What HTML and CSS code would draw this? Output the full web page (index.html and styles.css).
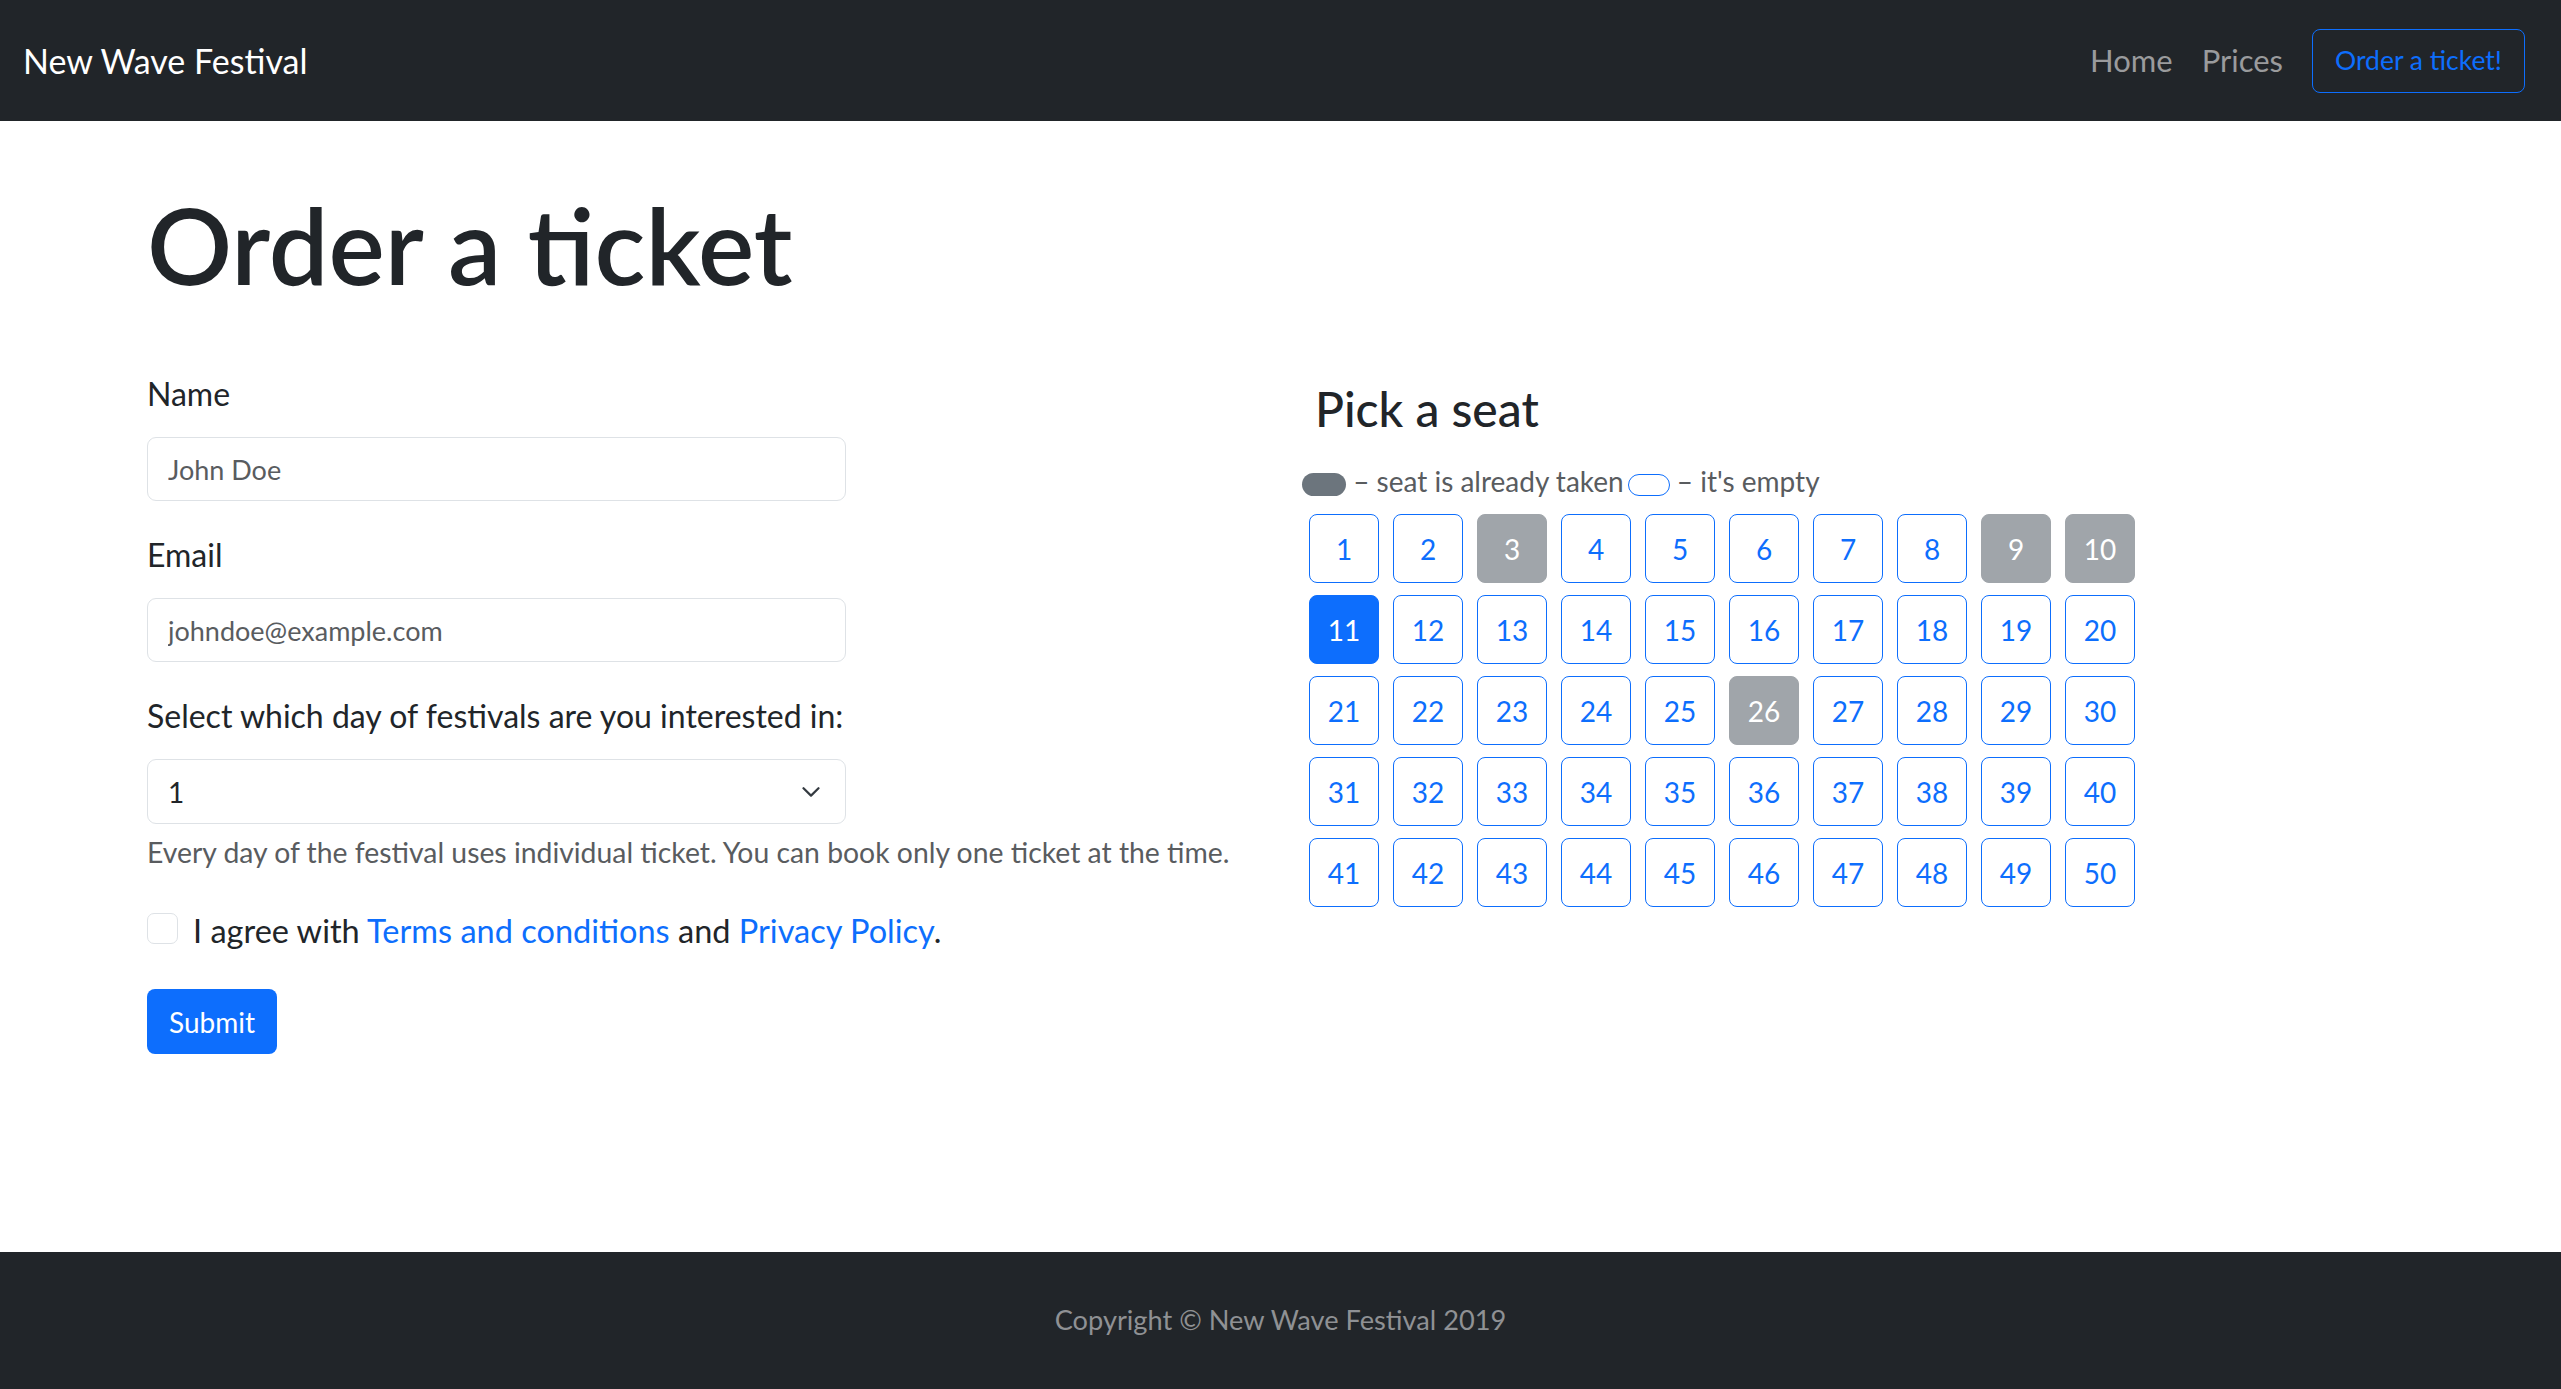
FILE: index.html
```html
<!DOCTYPE html>
<html lang="en">
<head>
<meta charset="utf-8">
<title>Order a ticket - New Wave Festival</title>
<link rel="stylesheet" href="styles.css">
</head>
<body>
<nav class="navbar">
  <a class="brand" href="#">New Wave Festival</a>
  <div class="nav-right">
    <a class="nav-link" href="#">Home</a>
    <a class="nav-link" href="#">Prices</a>
    <a class="btn-outline" href="#">Order a ticket!</a>
  </div>
</nav>
<main class="main">
  <h1 class="title">Order a ticket</h1>
  <div class="row">
    <form class="order-form">
      <div class="field">
        <label class="label" for="name">Name</label>
        <input class="input" id="name" type="text" placeholder="John Doe">
      </div>
      <div class="field">
        <label class="label" for="email">Email</label>
        <input class="input" id="email" type="email" placeholder="johndoe@example.com">
      </div>
      <div class="field">
        <label class="label" for="day">Select which day of festivals are you interested in:</label>
        <div class="select-wrap">
          <select class="input select" id="day">
            <option>1</option>
            <option>2</option>
            <option>3</option>
          </select>
          <svg class="chevron" width="18" height="10" viewBox="0 0 18 10" aria-hidden="true"><path d="M1.5 1.2 9 8.6 16.5 1.2" fill="none" stroke="#343a40" stroke-width="2.2" stroke-linecap="round" stroke-linejoin="round"/></svg>
        </div>
        <div class="help">Every day of the festival uses individual ticket. You can book only one ticket at the time.</div>
      </div>
      <div class="check-row">
        <input class="check" type="checkbox" id="agree">
        <label class="check-label" for="agree">I agree with <a class="link" href="#">Terms and conditions</a> and <a class="link" href="#">Privacy Policy</a>.</label>
      </div>
      <button class="submit" type="submit">Submit</button>
    </form>
    <section class="seats">
      <h3 class="seats-title">Pick a seat</h3>
      <p class="legend"><span class="pill pill-taken"></span> – seat is already taken<span class="pill pill-empty"></span> – it's empty</p>
      <div class="seat-grid">
        <button class="seat" type="button">1</button>
        <button class="seat" type="button">2</button>
        <button class="seat taken" type="button">3</button>
        <button class="seat" type="button">4</button>
        <button class="seat" type="button">5</button>
        <button class="seat" type="button">6</button>
        <button class="seat" type="button">7</button>
        <button class="seat" type="button">8</button>
        <button class="seat taken" type="button">9</button>
        <button class="seat taken" type="button">10</button>
        <button class="seat active" type="button">11</button>
        <button class="seat" type="button">12</button>
        <button class="seat" type="button">13</button>
        <button class="seat" type="button">14</button>
        <button class="seat" type="button">15</button>
        <button class="seat" type="button">16</button>
        <button class="seat" type="button">17</button>
        <button class="seat" type="button">18</button>
        <button class="seat" type="button">19</button>
        <button class="seat" type="button">20</button>
        <button class="seat" type="button">21</button>
        <button class="seat" type="button">22</button>
        <button class="seat" type="button">23</button>
        <button class="seat" type="button">24</button>
        <button class="seat" type="button">25</button>
        <button class="seat taken" type="button">26</button>
        <button class="seat" type="button">27</button>
        <button class="seat" type="button">28</button>
        <button class="seat" type="button">29</button>
        <button class="seat" type="button">30</button>
        <button class="seat" type="button">31</button>
        <button class="seat" type="button">32</button>
        <button class="seat" type="button">33</button>
        <button class="seat" type="button">34</button>
        <button class="seat" type="button">35</button>
        <button class="seat" type="button">36</button>
        <button class="seat" type="button">37</button>
        <button class="seat" type="button">38</button>
        <button class="seat" type="button">39</button>
        <button class="seat" type="button">40</button>
        <button class="seat" type="button">41</button>
        <button class="seat" type="button">42</button>
        <button class="seat" type="button">43</button>
        <button class="seat" type="button">44</button>
        <button class="seat" type="button">45</button>
        <button class="seat" type="button">46</button>
        <button class="seat" type="button">47</button>
        <button class="seat" type="button">48</button>
        <button class="seat" type="button">49</button>
        <button class="seat" type="button">50</button>
      </div>
    </section>
  </div>
</main>
<footer class="footer">Copyright © New Wave Festival 2019</footer>
</body>
</html>
```
FILE: styles.css
```css
* {
  box-sizing: border-box;
}

html,
body {
  margin: 0;
}

body {
  min-height: 100vh;
  display: flex;
  flex-direction: column;
  font-family: Lato, "Liberation Sans", sans-serif;
  font-size: 28px;
  line-height: 1.5;
  color: #212529;
  background: #fff;
}

/* Navbar */
.navbar {
  height: 121px;
  flex: none;
  display: flex;
  align-items: center;
  justify-content: space-between;
  padding: 0 36px 0 23px;
  background: #212529;
}

.brand {
  color: #fff;
  font-size: 34px;
  text-decoration: none;
}

.nav-right {
  display: flex;
  align-items: center;
}

.nav-link {
  margin-right: 29px;
  color: #9a9b9d;
  font-size: 31px;
  text-decoration: none;
}

.btn-outline {
  display: inline-flex;
  align-items: center;
  height: 64px;
  padding: 0 22px;
  border: 1px solid #0d6efd;
  border-radius: 8px;
  color: #0d6efd;
  font-size: 26.5px;
  text-decoration: none;
}

/* Main */
.main {
  flex: 1;
  padding: 56px 147px 0;
}

.title {
  margin: 0 0 62px;
  font-size: 106px;
  font-weight: 600;
  line-height: 134px;
}

.row {
  display: grid;
  grid-template-columns: 1155px 1fr;
  align-items: start;
}

.field {
  margin-bottom: 33px;
}

.label {
  display: block;
  margin-bottom: 22px;
  font-size: 32px;
  line-height: 42px;
}

.input {
  display: block;
  width: 699px;
  height: 64px;
  padding: 0 20px;
  border: 1px solid #dee2e6;
  border-radius: 9px;
  font: inherit;
  font-size: 27px;
  color: #212529;
  background: #fff;
  outline: none;
}

.input::placeholder {
  color: #595c5f;
  opacity: 1;
}

.select-wrap {
  position: relative;
  width: 699px;
}

.select {
  appearance: none;
  -webkit-appearance: none;
  height: 65px;
  font-size: 28px;
}

.chevron {
  position: absolute;
  right: 26px;
  top: 50%;
  transform: translateY(-50%);
  pointer-events: none;
}

.help {
  margin-top: 7px;
  font-size: 28.35px;
  line-height: 42px;
  color: #595c5f;
}

.check-row {
  display: flex;
  align-items: flex-start;
  gap: 15px;
  margin-bottom: 34px;
}

.check {
  appearance: none;
  -webkit-appearance: none;
  flex: none;
  width: 31px;
  height: 31px;
  margin: 7px 0 0;
  border: 1px solid #dee2e6;
  border-radius: 7px;
  background: #fff;
}

.check-label {
  font-size: 32.5px;
  line-height: 49px;
}

.link {
  color: #0d6efd;
  text-decoration: none;
}

.submit {
  height: 65px;
  padding: 0 22px;
  border: none;
  border-radius: 8px;
  background: #0d6efd;
  color: #fff;
  font: inherit;
}

/* Seats */
.seats-title {
  margin: 7px 0 23px 13px;
  font-size: 48px;
  font-weight: 500;
  line-height: 57px;
}

.legend {
  margin: 0 0 12px;
  line-height: 42px;
  color: #595c5f;
}

.pill {
  display: inline-block;
  width: 44px;
  height: 23px;
  border-radius: 12px;
  vertical-align: middle;
}

.pill-taken {
  background: #6c757d;
}

.pill-empty {
  width: 42px;
  height: 22px;
  margin-left: 4px;
  border: 1px solid #0d6efd;
  background: #fff;
}

.seat-grid {
  display: grid;
  grid-template-columns: repeat(10, 70px);
  grid-auto-rows: 69px;
  column-gap: 14px;
  row-gap: 12px;
  margin-left: 7px;
}

.seat {
  padding: 0;
  border: 1px solid #0d6efd;
  border-radius: 8px;
  background: #fff;
  color: #0d6efd;
  font: inherit;
  line-height: 1;
}

.seat.taken {
  border-color: #a0a5aa;
  background: #a0a5aa;
  color: #fff;
}

.seat.active {
  background: #0d6efd;
  color: #fff;
}

/* Footer */
.footer {
  flex: none;
  height: 137px;
  display: flex;
  align-items: center;
  justify-content: center;
  background: #212529;
  color: #8f9194;
  font-size: 27.2px;
}
```
